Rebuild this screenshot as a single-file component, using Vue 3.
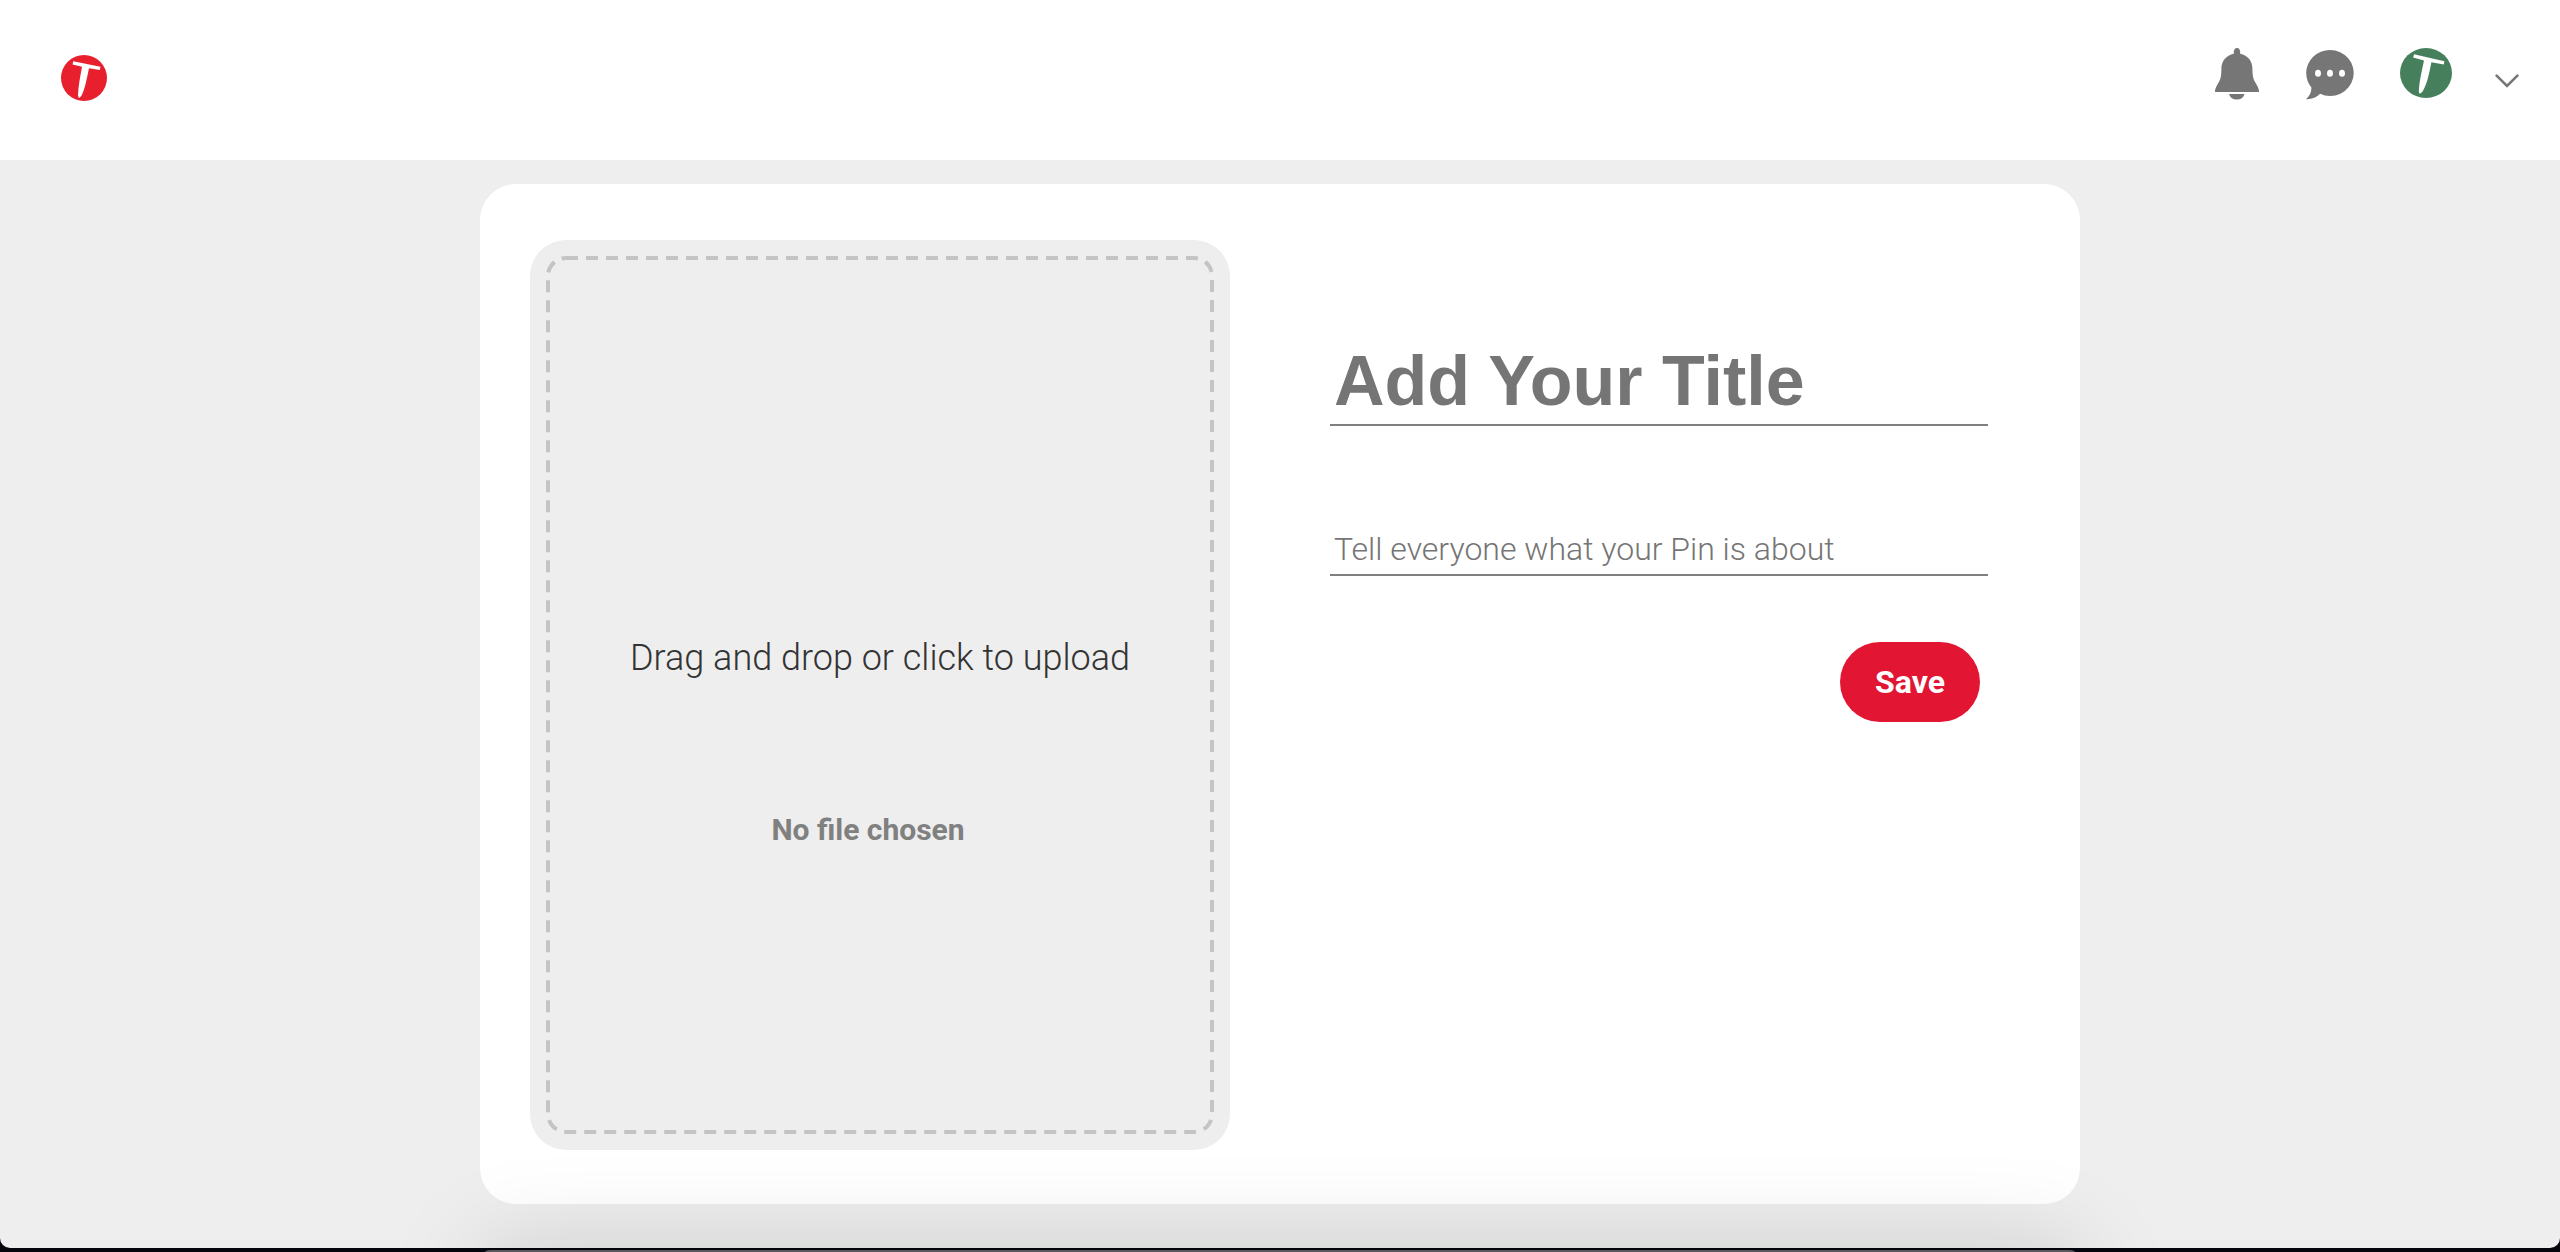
<script setup>
import { ref } from 'vue'

const title = ref('')
const description = ref('')
const fileName = ref('')

function onFile(event) {
  const file = event.target.files[0]
  fileName.value = file ? file.name : ''
}
</script>

<template>
  <div class="screen">
    <div class="page">
      <header class="header">
        <a class="logo" href="#" aria-label="Home">
          <svg viewBox="0 0 46 46" width="46" height="46" aria-hidden="true">
            <circle cx="23" cy="23" r="23" fill="#e8202e" />
            <path d="M12.2 6.2 L39.4 11.8 L38.9 15 L28 13.2 C26 22 24.5 33 20.3 41 L18 43.2 L17 40.5 C17.2 31 19.5 20.5 21 11.8 L11.6 9.6 Z" fill="#fff" />
          </svg>
        </a>
        <nav class="actions">
          <button class="icon bell" type="button" aria-label="Notifications">
            <svg viewBox="0 0 44 52" width="44" height="52" aria-hidden="true">
              <path d="M22 0 C24.4 0 25.4 2 25.2 5.8 C33 7.4 37.4 13.4 37.4 20.5 C37.4 32 39.6 32.5 42.6 38.6 C43.8 41 44 42.5 44 44 H0 C0 42.5 .2 41 1.4 38.6 C4.4 32.5 6.4 32 6.4 20.5 C6.4 13.4 11 7.4 18.8 5.8 C18.6 2 19.6 0 22 0 Z M14 46 H29.6 C28.4 49.6 25.8 51.6 21.8 51.6 C17.8 51.6 15.2 49.6 14 46 Z" fill="#767676" />
            </svg>
          </button>
          <button class="icon chat" type="button" aria-label="Messages">
            <svg viewBox="0 0 48 50" width="48" height="50" aria-hidden="true">
              <path d="M24 0 A23.6 23 0 1 1 14 43.8 C10.4 47.4 6.4 49.4 0 49.2 C3.6 46 5.6 42.4 5.4 37.4 C2 33.4 .2 28.4 .2 23 A23.8 23 0 0 1 24 0 Z" fill="#767676" />
              <g fill="#fff">
                <ellipse cx="12" cy="23.3" rx="3" ry="3.5" />
                <ellipse cx="24" cy="23.3" rx="3" ry="3.5" />
                <ellipse cx="36" cy="23.3" rx="3" ry="3.5" />
              </g>
            </svg>
          </button>
          <button class="icon avatar" type="button" aria-label="Profile">
            <svg viewBox="0 0 52 50" width="52" height="50" aria-hidden="true">
              <ellipse cx="26" cy="25" rx="26" ry="25" fill="#467f5c" />
              <path d="M14 6.2 L44.4 13.2 L43.8 16.4 L31.4 14.2 C29.4 24 27.6 35 22.6 43.6 L19.8 46 L18.8 43.4 C19.2 33 22 22 24 12.4 L13.2 9.6 Z" fill="#fff" />
            </svg>
          </button>
          <button class="icon more" type="button" aria-label="More options">
            <svg viewBox="0 0 24 14" width="24" height="14" aria-hidden="true">
              <path d="M1.6 1.6 L12 12 L22.4 1.6" fill="none" stroke="#767676" stroke-width="2.6" stroke-linecap="round" />
            </svg>
          </button>
        </nav>
      </header>

      <main class="main">
        <form class="card" @submit.prevent>
          <label class="upload">
            <svg class="dashes" aria-hidden="true">
              <rect class="dash-line" x="2" y="2" rx="18" fill="none" stroke="#c4c4c4" stroke-width="4" stroke-dasharray="12 8" />
            </svg>
            <span class="hint">Drag and drop or click to upload</span>
            <span class="file">{{ fileName || 'No file chosen' }}</span>
            <input class="picker" type="file" accept="image/*" @change="onFile" />
          </label>

          <div class="fields">
            <input v-model="title" class="field title" type="text" placeholder="Add Your Title" aria-label="Title" />
            <input v-model="description" class="field about" type="text" placeholder="Tell everyone what your Pin is about" aria-label="Description" />
            <button class="save" type="submit">Save</button>
          </div>
        </form>
      </main>
    </div>
    <div class="sheet"></div>
  </div>
</template>

<style>
body {
  margin: 0;
  background: #05050d;
}
</style>

<style scoped>
.screen {
  position: relative;
  display: flex;
  flex-direction: column;
  box-sizing: border-box;
  min-height: 100vh;
  padding-bottom: 4px;
  overflow: hidden;
  background: #05050d;
  font-family: Roboto, "Liberation Sans", sans-serif;
}

.page {
  flex: 1;
  border-radius: 0 0 10px 10px;
  background: #eee;
  overflow: hidden;
}

.header {
  display: flex;
  justify-content: space-between;
  box-sizing: border-box;
  height: 160px;
  padding: 48px 41px 0 61px;
  background: #fff;
}

.logo {
  height: 46px;
  margin-top: 7px;
}

.logo svg,
.icon svg {
  display: block;
}

.actions {
  display: flex;
  align-items: flex-start;
}

.icon {
  padding: 0;
  border: 0;
  background: none;
  cursor: pointer;
}

.chat {
  margin: 2px 46px 0 47px;
}

.more {
  margin: 26px 0 0 43px;
}

.main {
  padding: 24px 24px 44px;
}

.card {
  display: grid;
  grid-template-columns: 1fr 1fr;
  gap: 100px;
  box-sizing: border-box;
  max-width: 1600px;
  margin: 0 auto;
  padding: 56px 50px 54px;
  border-radius: 36px;
  background: #fff;
}

.upload {
  position: relative;
  display: flex;
  flex-direction: column;
  align-items: center;
  gap: 133px;
  box-sizing: border-box;
  min-height: 910px;
  padding-top: 397px;
  border-radius: 36px;
  background: #eee;
  cursor: pointer;
}

.dashes {
  position: absolute;
  top: 16px;
  left: 16px;
  width: calc(100% - 32px);
  height: calc(100% - 32px);
}

.dash-line {
  width: calc(100% - 4px);
  height: calc(100% - 4px);
}

.hint {
  font-size: 36px;
  line-height: 42px;
  font-weight: 300;
  color: #333;
}

.file {
  padding-right: 24px;
  font-size: 30px;
  line-height: 36px;
  font-weight: 700;
  color: #808080;
}

.picker {
  position: absolute;
  inset: 0;
  width: 100%;
  height: 100%;
  opacity: 0;
  cursor: pointer;
}

.fields {
  display: flex;
  flex-direction: column;
  padding: 98px 42px 0 0;
}

.field {
  box-sizing: border-box;
  width: 100%;
  padding: 0 4px;
  border: 0;
  border-bottom: 2px solid #808080;
  outline: 0;
  background: none;
  color: #333;
}

.field::placeholder {
  color: #757575;
  opacity: 1;
}

.title {
  height: 88px;
  font-family: "Liberation Sans", Arial, sans-serif;
  font-size: 70px;
  font-weight: 700;
}

.about {
  height: 52px;
  margin-top: 98px;
  font-family: inherit;
  font-size: 32px;
  font-weight: 300;
}

.save {
  align-self: flex-end;
  width: 140px;
  height: 80px;
  margin: 66px 8px 0 0;
  padding: 0;
  border: 0;
  border-radius: 40px;
  background: #e21532;
  color: #fff;
  font-family: inherit;
  font-size: 32px;
  font-weight: 700;
  cursor: pointer;
}

/* Panel rising from below the window, casting its shadow on the page */
.sheet {
  position: absolute;
  top: calc(100% - 2px);
  left: 50%;
  width: 1596px;
  height: 400px;
  margin-left: -798px;
  border-radius: 8px;
  background: #5a565a;
  box-shadow: 0 0 100px rgba(0, 0, 0, 0.15);
  pointer-events: none;
}
</style>
